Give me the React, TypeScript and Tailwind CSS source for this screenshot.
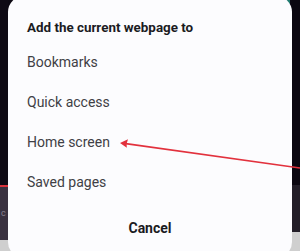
const items = ["Bookmarks", "Quick access", "Home screen", "Saved pages"];

export default function App() {
  return (
    <div
      className="relative flex h-[251px] w-[300px] overflow-hidden bg-[linear-gradient(to_bottom,#0c0812_0px,#0c0812_200px,#cfcfcf_200px)]"
      style={{ fontFamily: "Roboto, 'Noto Sans', sans-serif" }}
    >
      {/* teal hint behind the top right corner */}
      <div className="absolute left-[280px] top-0 h-[4px] w-[10px] bg-[#1f7a70]" />

      <div className="flex w-[8px] flex-col">
        <div className="h-[185px] bg-[#0e0a14]" />
        <div className="h-[2px] bg-[#d8323c]" />
        <div className="flex h-[53px] items-center bg-[#3a3240] pl-[1px] text-[9px] leading-none text-[#8a8490]">
          <span>c</span>
        </div>
        <div className="flex-1 bg-[#cfcfcf]" />
      </div>

      <div className="relative z-10 mt-[-4px] flex h-[262px] w-[284px] shrink-0 flex-col rounded-[16px] bg-[#fcfcfe] pl-[19px] pt-[24px]">
        <div className="text-[13.4px] font-bold leading-[16px] text-[#1b1b1f]">
          Add the current webpage to
        </div>
        <div className="mt-[6px] flex flex-col">
          {items.map((item) => (
            <div
              key={item}
              className="flex h-[40px] items-center text-[14px] leading-none text-[#404045]"
            >
              {item}
            </div>
          ))}
        </div>
        <div className="mt-[6px] flex h-[40px] items-center justify-center pr-[19px] text-[14px] font-bold leading-none text-[#1b1b1f]">
          Cancel
        </div>
      </div>

      <div className="flex w-[8px] flex-col">
        <div className="h-[185px] bg-[#0b0710]" />
        <div className="h-[47px] bg-[#231e28]" />
        <div className="flex-1 bg-[#cfcfcf]" />
      </div>

      <svg
        className="pointer-events-none absolute left-0 top-0 z-20"
        width="300"
        height="251"
        viewBox="0 0 300 251"
      >
        <line x1="300" y1="168" x2="124" y2="143.4" stroke="#e2313d" strokeWidth="1.6" />
        <path d="M120 143 L128 139.2 L126.6 143.7 L126.8 147.7 Z" fill="#e2313d" />
      </svg>
    </div>
  );
}
